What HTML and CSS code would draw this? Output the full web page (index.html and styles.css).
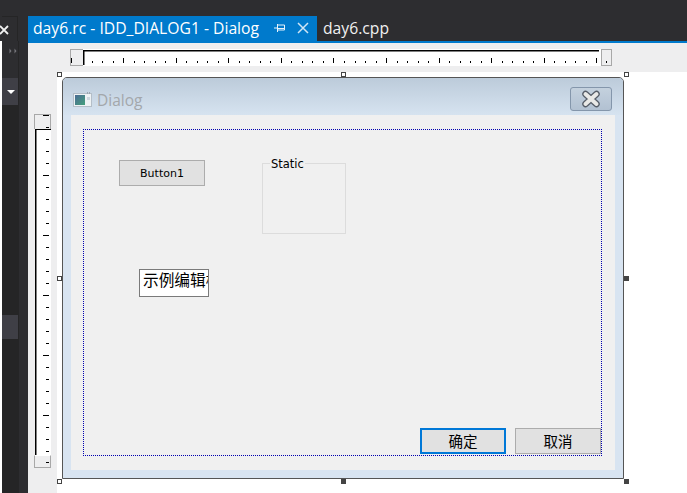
FILE: index.html
```html
<!DOCTYPE html>
<html lang="zh-CN">
<head>
    <meta charset="UTF-8">
    <title>day6.rc - IDD_DIALOG1 - Dialog</title>
    <link rel="stylesheet" href="styles.css">
</head>
<body>
    <div class="top-bar">
        <div class="top-gap"></div>
        <div class="tab tab-active">
            <span class="tab-title">day6.rc - IDD_DIALOG1 - Dialog</span>
            <svg class="tab-pin" width="12" height="12" viewBox="0 0 12 12">
                <path d="M0 6H3M3.5 2V10M3.5 3H10.5V8H3.5M3.5 6.5H10.5" fill="none" stroke="#e6f2fb" stroke-width="1"/>
            </svg>
            <svg class="tab-close" width="12" height="12" viewBox="0 0 12 12">
                <path d="M1 1L11 11M11 1L1 11" fill="none" stroke="#cfe5f5" stroke-width="1.5"/>
            </svg>
        </div>
        <div class="tab">day6.cpp</div>
    </div>

    <div class="main">
        <div class="side">
            <div class="side-panel">
                <div class="side-head">
                    <svg width="10" height="10" viewBox="0 0 10 10">
                        <path d="M1 1L9 9M9 1L1 9" fill="none" stroke="#f1f1f1" stroke-width="1.8"/>
                    </svg>
                </div>
                <div class="side-dots">
                    <svg width="9" height="6" viewBox="0 0 9 6">
                        <path d="M0.5 0.5L2.5 3L0.5 5.5ZM5.5 0.5L7.5 3L5.5 5.5Z" fill="#77777c"/>
                    </svg>
                </div>
                <div class="side-row side-drop"><span class="drop-arrow"></span></div>
                <div class="side-list"></div>
                <div class="side-row side-low"></div>
                <div class="side-rest"></div>
            </div>
            <div class="side-strip"></div>
        </div>

        <div class="doc">
            <div class="designer">
                <!-- horizontal ruler -->
                <div class="ruler-h">
                    <div class="thumb thumb-h">
                        <span class="thumb-mark"></span>
                    </div>
                    <svg class="ticks-h" width="517" height="17">
                        <path shape-rendering="crispEdges" fill="none" stroke="#000" stroke-width="1" d="M9.5 12v2M19.5 12v2M30.5 12v2M51.5 12v2M61.5 12v2M72.5 12v2M82.5 12v2M103.5 12v2M114.5 12v2M124.5 12v2M135.5 12v2M156.5 12v2M166.5 12v2M177.5 12v2M187.5 12v2M208.5 12v2M219.5 12v2M229.5 12v2M240.5 12v2M261.5 12v2M272.5 12v2M282.5 12v2M293.5 12v2M314.5 12v2M324.5 12v2M335.5 12v2M345.5 12v2M366.5 12v2M377.5 12v2M387.5 12v2M398.5 12v2M419.5 12v2M429.5 12v2M440.5 12v2M450.5 12v2M471.5 12v2M482.5 12v2M492.5 12v2M503.5 12v2"/>
                        <path shape-rendering="crispEdges" fill="none" stroke="#000" stroke-width="1" d="M40.5 9v5M93.5 9v5M145.5 9v5M198.5 9v5M250.5 9v5M303.5 9v5M356.5 9v5M408.5 9v5M461.5 9v5M513.5 9v5"/>
                    </svg>
                    <div class="thumb thumb-end">
                        <span class="thumb-dot"></span>
                    </div>
                </div>

                <!-- vertical ruler -->
                <div class="ruler-v">
                    <div class="thumb thumb-v">
                        <span class="v-long"></span>
                        <span class="v-short"></span>
                    </div>
                    <svg class="ticks-v" width="16" height="326">
                        <defs>
                            <pattern id="vticks" width="16" height="60" patternUnits="userSpaceOnUse">
                                <rect x="11" y="10" width="3" height="1" fill="#000"/>
                                <rect x="11" y="22" width="3" height="1" fill="#000"/>
                                <rect x="11" y="34" width="3" height="1" fill="#000"/>
                                <rect x="8" y="46" width="6" height="1" fill="#000"/>
                                <rect x="11" y="58" width="3" height="1" fill="#000"/>
                            </pattern>
                        </defs>
                        <rect x="0" y="0" width="16" height="326" fill="url(#vticks)"/>
                    </svg>
                    <div class="thumb thumb-v-end">
                        <span class="v-short"></span>
                    </div>
                </div>

                <!-- dialog being edited -->
                <div class="dialog">
                    <div class="dialog-title">
                        <svg class="dialog-icon" width="19" height="15" viewBox="0 0 19 15">
                            <defs>
                                <linearGradient id="iconfill" x1="0" y1="0" x2="1" y2="1">
                                    <stop offset="0" stop-color="#4a6a94"/>
                                    <stop offset="1" stop-color="#45a07c"/>
                                </linearGradient>
                            </defs>
                            <rect x="0.5" y="1.5" width="18" height="13" fill="#eef2f4" stroke="#b4bec8"/>
                            <rect x="2" y="3" width="10" height="10" fill="url(#iconfill)"/>
                            <rect x="14" y="5" width="3" height="3" fill="#cdd7de"/>
                            <rect x="14" y="0" width="1" height="2" fill="#9aa6b0"/>
                            <rect x="16" y="0" width="1" height="2" fill="#9aa6b0"/>
                        </svg>
                        <span class="dialog-name">Dialog</span>
                        <div class="dialog-close">
                            <svg width="20" height="18" viewBox="0 0 20 18">
                                <path d="M4.5 4L15.5 14M15.5 4L4.5 14" fill="none" stroke="#565d68" stroke-width="6.5" stroke-linecap="round"/>
                                <path d="M4.5 4L15.5 14M15.5 4L4.5 14" fill="none" stroke="#e9e9e7" stroke-width="4" stroke-linecap="round"/>
                            </svg>
                        </div>
                    </div>
                    <div class="dialog-client"></div>
                </div>

                <div class="margin-box"></div>

                <div class="ctl ctl-button btn-one">Button1</div>
                <div class="ctl group-box"><span class="group-label">Static</span></div>
                <div class="ctl edit-box"><span class="edit-text">示例编辑框</span></div>
                <div class="ctl ctl-button btn-ok cjk">确定</div>
                <div class="ctl ctl-button btn-cancel cjk">取消</div>

                <!-- selection handles -->
                <span class="handle h-tl"></span>
                <span class="handle h-tm"></span>
                <span class="handle h-tr"></span>
                <span class="handle h-ml"></span>
                <span class="handle handle-on h-mr"></span>
                <span class="handle h-bl"></span>
                <span class="handle handle-on h-bm"></span>
                <span class="handle handle-on h-br"></span>
            </div>
        </div>
    </div>
</body>
</html>
```

FILE: styles.css
```css
html, body {
    margin: 0;
    height: 100%;
    overflow: hidden;
}

body {
    display: flex;
    flex-direction: column;
    width: 687px;
    height: 493px;
    background-color: #fff;
    font-family: "Open Sans", "Liberation Sans", sans-serif;
}

/* top tab bar */
.top-bar {
    display: flex;
    align-items: flex-end;
    height: 41px;
    padding-left: 2px;
    background-color: #2d2d30;
}

.top-gap {
    width: 16px;
    height: 25px;
    margin-right: 10px;
    box-sizing: border-box;
    border-top: 1px solid #252526;
    border-right: 1px solid #252526;
}

.tab {
    display: flex;
    align-items: center;
    height: 25px;
    padding: 0 6px 2px;
    box-sizing: border-box;
    font-size: 15.7px;
    color: #f1f1f1;
}

.tab-active {
    width: 289px;
    padding: 0 0 2px 5px;
    background-color: #007acc;
    color: #fff;
}

.tab-title {
    width: 241px;
    white-space: nowrap;
}

.tab-pin {
    margin-right: 11px;
}

/* main area */
.main {
    flex: 1;
    display: flex;
    min-height: 0;
}

.side {
    display: flex;
    width: 28px;
    padding-left: 2px;
    box-sizing: border-box;
    background-color: #fff;
}

.side-panel {
    width: 16px;
    display: flex;
    flex-direction: column;
    background-color: #2d2d30;
}

.side-head {
    height: 0;
    position: relative;
}

.side-head svg {
    position: absolute;
    left: -3px;
    top: -16px;
}

.side-dots {
    height: 37px;
    display: flex;
    justify-content: flex-end;
    align-items: flex-start;
    padding-top: 7px;
    box-sizing: border-box;
}

.side-row {
    height: 27px;
    background-color: #3f3f46;
}

.side-drop {
    display: flex;
    align-items: center;
    justify-content: center;
}

.drop-arrow {
    width: 0;
    height: 0;
    margin-left: 2px;
    border-left: 4px solid transparent;
    border-right: 4px solid transparent;
    border-top: 4px solid #fff;
}

.side-list {
    height: 210px;
    background-color: #252526;
}

.side-low {
    height: 24px;
}

.side-rest {
    flex: 1;
    background-color: #252526;
}

.side-strip {
    flex: 1;
    border-left: 1px solid #252526;
    background-color: #2d2d30;
}

.doc {
    flex: 1;
    display: flex;
    flex-direction: column;
    border-top: 2px solid #007acc;
    background-color: #fff;
}

/* designer canvas, coordinates are relative to the document corner (28, 43) */
.designer {
    position: relative;
    flex: 1;
    background:
        linear-gradient(#eeeeef, #eeeeef) 0 0 / 100% 29px no-repeat,
        linear-gradient(#eeeeef, #eeeeef) 0 0 / 29px 100% no-repeat,
        #fff;
}

.ruler-h {
    position: absolute;
    left: 42px;
    top: 6px;
    width: 542px;
    height: 17px;
    display: flex;
    background-color: #fff;
}

.ticks-h {
    display: block;
    width: 517px;
    margin-right: 2px;
    background:
        linear-gradient(#000, #000) 0 1px / 100% 1.5px no-repeat,
        linear-gradient(#000, #000) 0 1px / 1.5px 15px no-repeat,
        #fff;
}

.thumb {
    position: relative;
    box-sizing: border-box;
    background-color: #eeeeef;
    border: 1px solid #a8a8a8;
}

.thumb-h {
    width: 13px;
    height: 17px;
    border-right: 0;
}

.thumb-mark {
    position: absolute;
    left: 0;
    bottom: 2px;
    width: 1px;
    height: 5px;
    background-color: #000;
}

.thumb-end {
    width: 11px;
    height: 17px;
}

.thumb-dot {
    position: absolute;
    left: 4px;
    bottom: 2px;
    width: 1px;
    height: 2px;
    background-color: #000;
}

.ruler-v {
    position: absolute;
    left: 6px;
    top: 71px;
    width: 17px;
    display: flex;
    flex-direction: column;
    align-items: flex-start;
}

.thumb-v {
    width: 17px;
    height: 15px;
    border-bottom: 0;
}

.v-long {
    position: absolute;
    left: 8px;
    top: 0;
    width: 6px;
    height: 1px;
    background-color: #000;
}

.v-short {
    position: absolute;
    left: 11px;
    bottom: 1px;
    width: 3px;
    height: 1px;
    background-color: #000;
}

.ticks-v {
    display: block;
    margin-left: 1px;
    background:
        linear-gradient(#000, #000) 0 0 / 100% 1px no-repeat,
        linear-gradient(#000, #000) 0 0 / 1.5px 100% no-repeat,
        #fff;
}

.thumb-v-end {
    width: 17px;
    height: 13px;
    border-top-color: #fff;
}

.thumb-v-end .v-short {
    bottom: 4px;
}

.dialog {
    position: absolute;
    left: 34px;
    top: 34px;
    width: 562px;
    height: 402px;
    box-sizing: border-box;
    display: flex;
    flex-direction: column;
    border: 1.5px solid #555;
    border-radius: 5px 5px 0 0;
    background-color: #d8e4f1;
}

.dialog-title {
    height: 36.5px;
    display: flex;
    align-items: flex-start;
    padding: 9px 11px 0 10px;
    box-sizing: border-box;
    border-radius: 4px 4px 0 0;
    background: linear-gradient(#bccbda, #d6e3f0);
}

.dialog-icon {
    margin: 5px 5px 0 0;
}

.dialog-name {
    flex: 1;
    padding-top: 2px;
    font-size: 15.5px;
    color: #a3a7ab;
}

.dialog-close {
    width: 42px;
    height: 24px;
    box-sizing: border-box;
    display: flex;
    align-items: center;
    justify-content: center;
    border: 1px solid #8496ab;
    border-radius: 3px;
    background: linear-gradient(#c4d1de, #b2c1d2);
}

.dialog-client {
    margin: 0 8px 8px;
    flex: 1;
    background-color: #f0f0f0;
}

.margin-box {
    position: absolute;
    left: 55px;
    top: 86px;
    width: 519px;
    height: 327px;
    box-sizing: border-box;
    border: 1px dotted #0000b0;
}

.ctl {
    position: absolute;
    box-sizing: border-box;
}

.ctl-button {
    display: flex;
    align-items: center;
    justify-content: center;
    border: 1px solid #acacac;
    background-color: #e1e1e1;
    font-family: "DejaVu Sans", sans-serif;
    font-size: 11px;
    color: #000;
}

.cjk {
    padding-bottom: 2px;
    font-family: "Noto Sans CJK SC", sans-serif;
    font-size: 14.5px;
}

.btn-one {
    left: 91px;
    top: 117px;
    width: 86px;
    height: 26px;
}

.btn-ok {
    left: 392px;
    top: 385px;
    width: 86px;
    height: 26px;
    border: 2px solid #0078d7;
}

.btn-cancel {
    left: 487px;
    top: 385px;
    width: 86px;
    height: 26px;
}

.group-box {
    left: 234px;
    top: 120px;
    width: 84px;
    height: 71px;
    border: 1px solid #dcdcdc;
}

.group-label {
    position: absolute;
    left: 7px;
    top: -7px;
    padding: 0 1px;
    background-color: #f0f0f0;
    font-family: "DejaVu Sans", sans-serif;
    font-size: 11.5px;
    line-height: 14px;
    color: #000;
}

.edit-box {
    left: 111px;
    top: 226px;
    width: 70px;
    height: 28px;
    padding-left: 3px;
    overflow: hidden;
    border: 1px solid #7a7a7a;
    background-color: #fff;
    font-family: "Noto Sans CJK SC", sans-serif;
    font-size: 15.7px;
    line-height: 20px;
    white-space: nowrap;
    color: #000;
}

.edit-text {
    display: block;
    overflow: hidden;
}

.handle {
    position: absolute;
    width: 5px;
    height: 5px;
    box-sizing: border-box;
    border: 1px solid #444;
    background-color: #fff;
}

.handle-on {
    background-color: #444;
}

.h-tl { left: 29px; top: 29px; }
.h-tm { left: 313px; top: 29px; }
.h-tr { left: 596px; top: 29px; }
.h-ml { left: 29px; top: 233px; }
.h-mr { left: 596px; top: 233px; }
.h-bl { left: 29px; top: 436px; }
.h-bm { left: 313px; top: 436px; }
.h-br { left: 596px; top: 436px; }
```
